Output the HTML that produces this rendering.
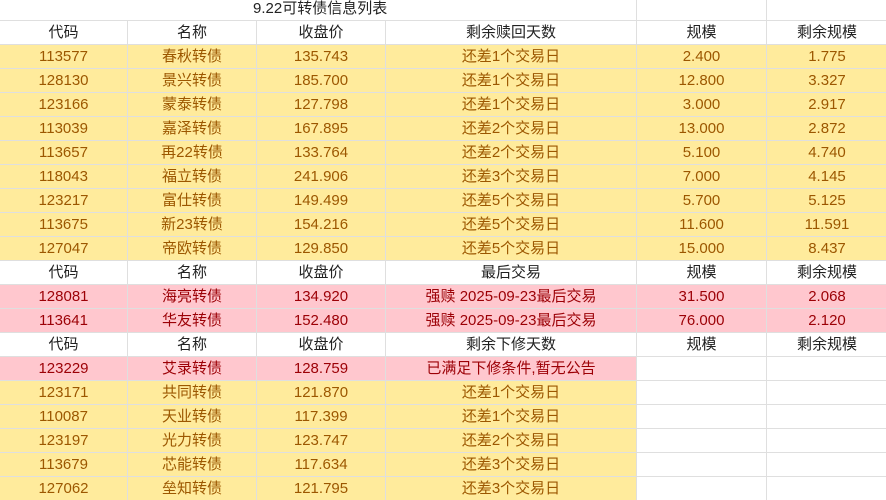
<!DOCTYPE html>
<html><head><meta charset="utf-8"><style>
body{margin:0;width:886px;height:498px;overflow:hidden;background:#fff;font-family:"Liberation Sans","Noto Sans CJK SC",sans-serif;font-size:15px;}
.g{position:absolute;top:20px;left:0;width:886px;display:grid;grid-template-columns:127px 128px 128px 250px 129px 120px;grid-auto-rows:23px;gap:1px;padding-top:1px;background:#dfdfdf;}
.g div{background:#fff;color:#222;text-align:center;line-height:23px;white-space:nowrap;overflow:hidden;}
.g .y{background:#ffeb9c;color:#9c5700;}
.g .p{background:#ffc7ce;color:#9c0006;}
.t{position:absolute;top:0;left:253px;height:20px;line-height:17px;color:#222;}
</style></head><body>
<div class="t">9.22可转债信息列表</div>
<div style="position:absolute;left:636px;top:0;width:1px;height:20px;background:#dfdfdf"></div>
<div style="position:absolute;left:766px;top:0;width:1px;height:20px;background:#dfdfdf"></div>
<div class="g">
<div>代码</div><div>名称</div><div>收盘价</div><div>剩余赎回天数</div><div>规模</div><div>剩余规模</div>
<div class="y">113577</div><div class="y">春秋转债</div><div class="y">135.743</div><div class="y">还差1个交易日</div><div class="y">2.400</div><div class="y">1.775</div>
<div class="y">128130</div><div class="y">景兴转债</div><div class="y">185.700</div><div class="y">还差1个交易日</div><div class="y">12.800</div><div class="y">3.327</div>
<div class="y">123166</div><div class="y">蒙泰转债</div><div class="y">127.798</div><div class="y">还差1个交易日</div><div class="y">3.000</div><div class="y">2.917</div>
<div class="y">113039</div><div class="y">嘉泽转债</div><div class="y">167.895</div><div class="y">还差2个交易日</div><div class="y">13.000</div><div class="y">2.872</div>
<div class="y">113657</div><div class="y">再22转债</div><div class="y">133.764</div><div class="y">还差2个交易日</div><div class="y">5.100</div><div class="y">4.740</div>
<div class="y">118043</div><div class="y">福立转债</div><div class="y">241.906</div><div class="y">还差3个交易日</div><div class="y">7.000</div><div class="y">4.145</div>
<div class="y">123217</div><div class="y">富仕转债</div><div class="y">149.499</div><div class="y">还差5个交易日</div><div class="y">5.700</div><div class="y">5.125</div>
<div class="y">113675</div><div class="y">新23转债</div><div class="y">154.216</div><div class="y">还差5个交易日</div><div class="y">11.600</div><div class="y">11.591</div>
<div class="y">127047</div><div class="y">帝欧转债</div><div class="y">129.850</div><div class="y">还差5个交易日</div><div class="y">15.000</div><div class="y">8.437</div>
<div>代码</div><div>名称</div><div>收盘价</div><div>最后交易</div><div>规模</div><div>剩余规模</div>
<div class="p">128081</div><div class="p">海亮转债</div><div class="p">134.920</div><div class="p">强赎 2025-09-23最后交易</div><div class="p">31.500</div><div class="p">2.068</div>
<div class="p">113641</div><div class="p">华友转债</div><div class="p">152.480</div><div class="p">强赎 2025-09-23最后交易</div><div class="p">76.000</div><div class="p">2.120</div>
<div>代码</div><div>名称</div><div>收盘价</div><div>剩余下修天数</div><div>规模</div><div>剩余规模</div>
<div class="p">123229</div><div class="p">艾录转债</div><div class="p">128.759</div><div class="p">已满足下修条件,暂无公告</div><div></div><div></div>
<div class="y">123171</div><div class="y">共同转债</div><div class="y">121.870</div><div class="y">还差1个交易日</div><div></div><div></div>
<div class="y">110087</div><div class="y">天业转债</div><div class="y">117.399</div><div class="y">还差1个交易日</div><div></div><div></div>
<div class="y">123197</div><div class="y">光力转债</div><div class="y">123.747</div><div class="y">还差2个交易日</div><div></div><div></div>
<div class="y">113679</div><div class="y">芯能转债</div><div class="y">117.634</div><div class="y">还差3个交易日</div><div></div><div></div>
<div class="y">127062</div><div class="y">垒知转债</div><div class="y">121.795</div><div class="y">还差3个交易日</div><div></div><div></div>
</div>
</body></html>
